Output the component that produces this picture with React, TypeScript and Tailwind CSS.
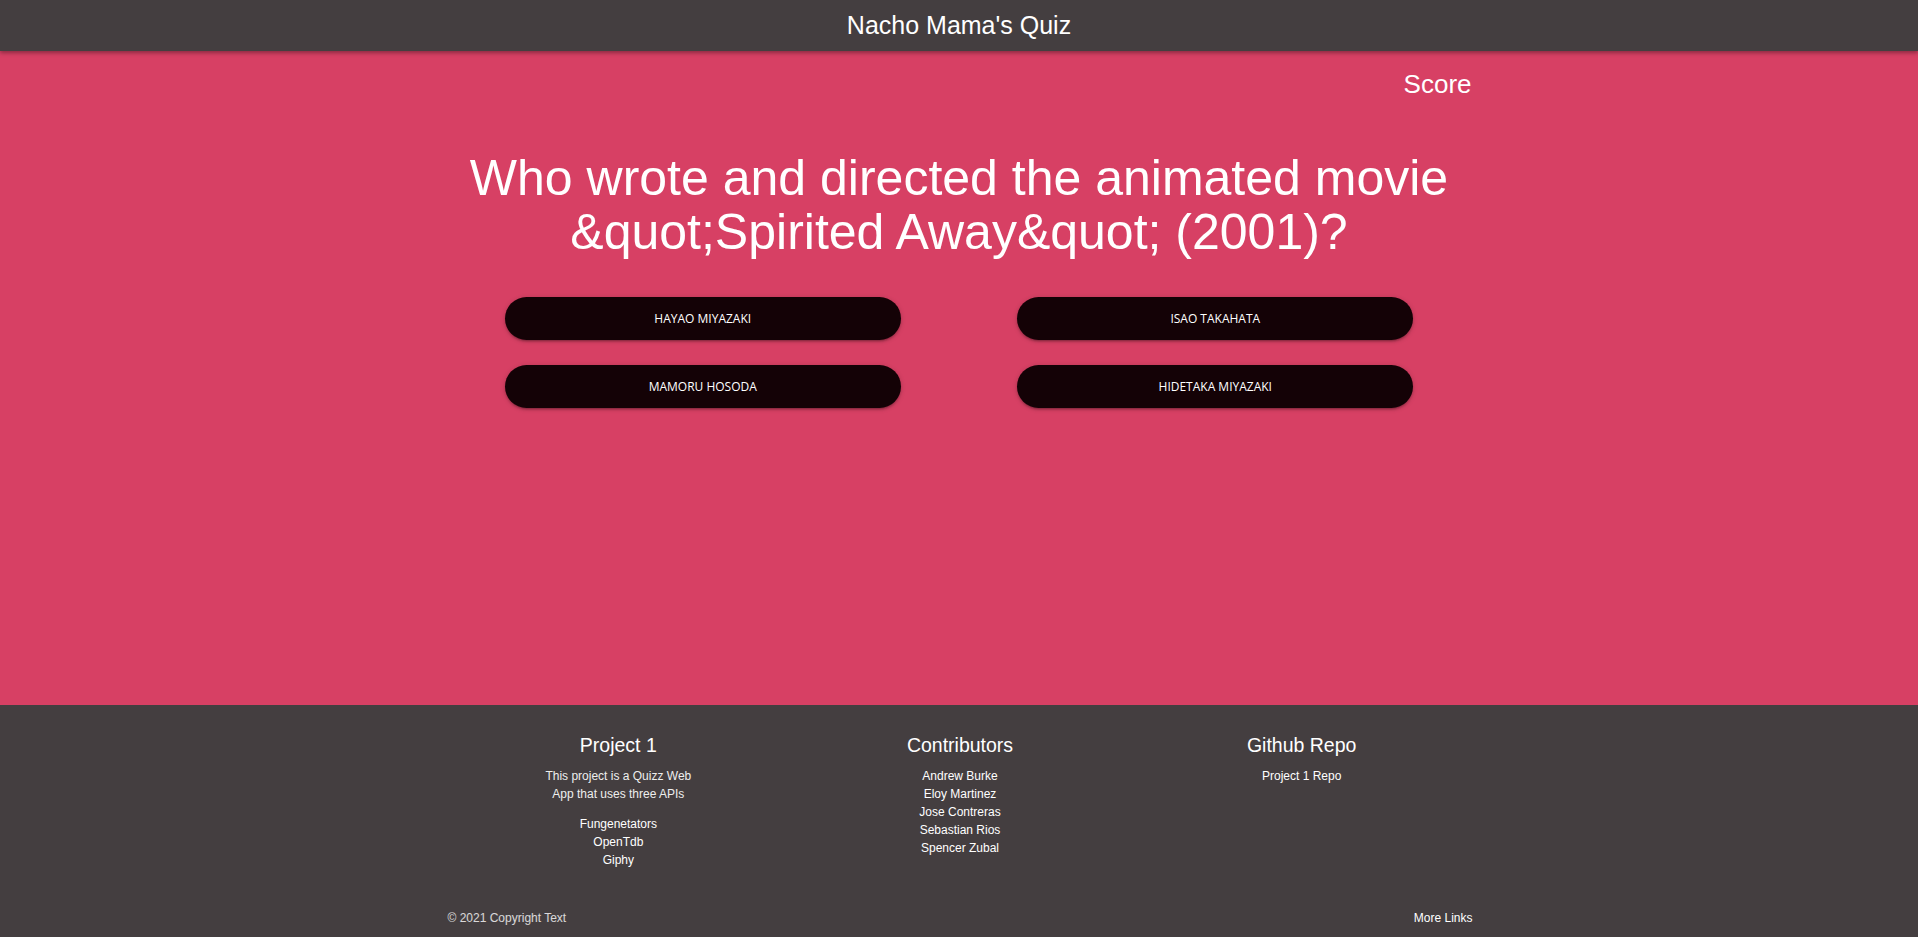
import React from 'react';

const answers = ['Hayao Miyazaki', 'Isao Takahata', 'Mamoru Hosoda', 'Hidetaka Miyazaki'];

const projectApis = ['Fungenetators', 'OpenTdb', 'Giphy'];

const contributors = ['Andrew Burke', 'Eloy Martinez', 'Jose Contreras', 'Sebastian Rios', 'Spencer Zubal'];

export default function App() {
  return (
    <div className="flex min-h-screen flex-col bg-[#d74064] font-['Liberation_Sans',Arial,sans-serif] text-white">
      <header className="relative z-10 flex h-[51px] items-center justify-center bg-[#443e40] shadow-[0_2px_4px_rgba(0,0,0,0.35)]">
        <h1 className="text-[25px] leading-[51px]">Nacho Mama's Quiz</h1>
      </header>

      <main className="flex-1 pt-[18px]">
        <div className="mx-auto w-[1025px]">
          <p className="text-right text-[26px] leading-[30px]">Score</p>

          <h2 className="mt-[52px] text-center text-[50px] leading-[54px]">
            Who wrote and directed the animated movie &amp;quot;Spirited Away&amp;quot; (2001)?
          </h2>

          <div className="mt-[38px] grid grid-cols-2 gap-y-[25px]">
            {answers.map((answer) => (
              <button
                key={answer}
                className="h-[43px] w-[396px] justify-self-center rounded-full bg-[#140206] font-['Open_Sans',sans-serif] text-[12px] uppercase text-white shadow-[0_2px_2px_0_rgba(0,0,0,0.14),0_3px_1px_-2px_rgba(0,0,0,0.12),0_1px_5px_0_rgba(0,0,0,0.2)]"
              >
                {answer}
              </button>
            ))}
          </div>
        </div>
      </main>

      <footer className="bg-[#443e40] pb-[10px] pt-[28px]">
        <div className="mx-auto w-[1025px] translate-x-px">
          <div className="grid h-[136px] grid-cols-3 text-center">
            <div>
              <h5 className="text-[19.5px] leading-[24px]">Project 1</h5>
              <p className="mx-auto mt-[10px] w-[155px] text-[12px] leading-[18px] text-[#eeeeee]">
                This project is a Quizz Web App that uses three APIs
              </p>
              <ul className="mt-[12px] text-[12px] leading-[18px]">
                {projectApis.map((api) => (
                  <li key={api}>{api}</li>
                ))}
              </ul>
            </div>
            <div>
              <h5 className="text-[19.5px] leading-[24px]">Contributors</h5>
              <ul className="mt-[10px] text-[12px] leading-[18px]">
                {contributors.map((name) => (
                  <li key={name}>{name}</li>
                ))}
              </ul>
            </div>
            <div>
              <h5 className="text-[19.5px] leading-[24px]">Github Repo</h5>
              <ul className="mt-[10px] text-[12px] leading-[18px]">
                <li>Project 1 Repo</li>
              </ul>
            </div>
          </div>

          <div className="mt-[40px] flex h-[18px] items-center justify-between text-[12px] leading-[18px]">
            <span className="text-white/80">© 2021 Copyright Text</span>
            <span>More Links</span>
          </div>
        </div>
      </footer>
    </div>
  );
}
